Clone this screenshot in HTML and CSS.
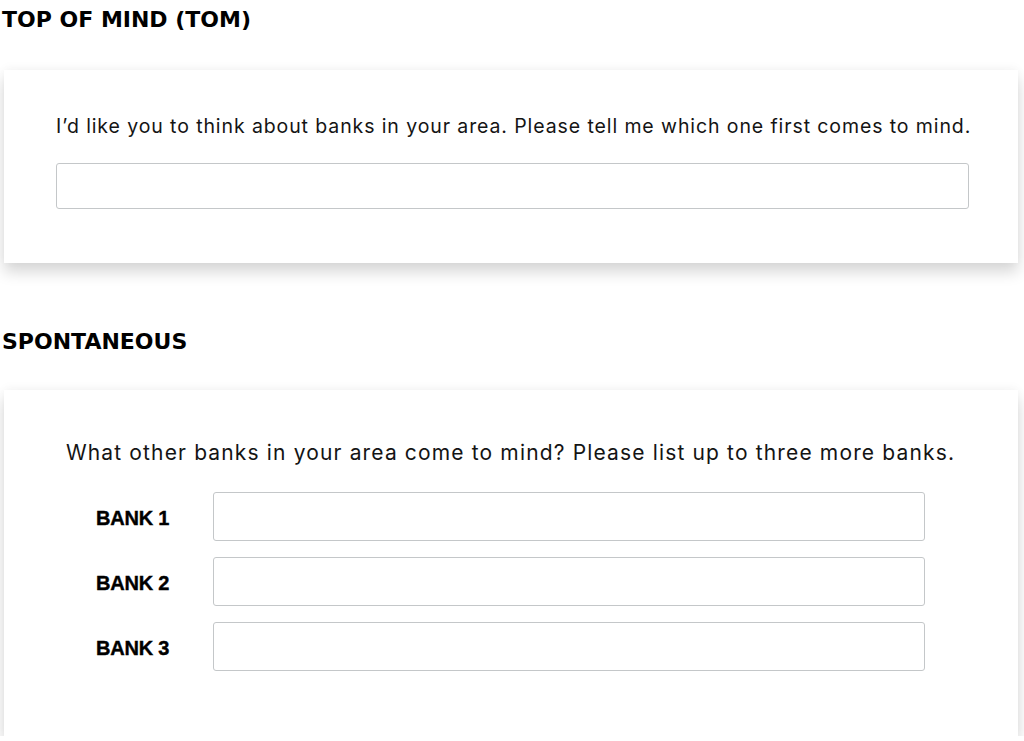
FILE: index.html
```html
<!DOCTYPE html>
<html lang="en">
<head>
<meta charset="utf-8">
<title>Bank awareness</title>
<link rel="stylesheet" href="styles.css">
</head>
<body>
<main class="page">
  <section class="block block-tom">
    <h2 class="block-title">TOP OF MIND (TOM)</h2>
    <div class="card card-tom">
      <p class="question">I’d like you to think about banks in your area. Please tell me which one first comes to mind.</p>
      <input class="field field-wide" type="text" aria-label="Top of mind bank">
    </div>
  </section>
  <section class="block block-spont">
    <h2 class="block-title">SPONTANEOUS</h2>
    <div class="card card-spont">
      <p class="question question-large">What other banks in your area come to mind? Please list up to three more banks.</p>
      <div class="bank-list">
        <label class="bank-row"><span class="bank-label">BANK 1</span><input class="field" type="text"></label>
        <label class="bank-row"><span class="bank-label">BANK 2</span><input class="field" type="text"></label>
        <label class="bank-row"><span class="bank-label">BANK 3</span><input class="field" type="text"></label>
      </div>
    </div>
  </section>
</main>
</body>
</html>
```
FILE: styles.css
```css
* { box-sizing: border-box; }
html, body { margin: 0; padding: 0; background: #fff; }
body {
  font-family: Inter, "Liberation Sans", sans-serif;
  color: #141414;
}
.page {
  padding: 7px 6px 0 4px;
}
.block-title {
  margin: 0 0 0 -2px;
  font-family: "DejaVu Sans", sans-serif;
  font-weight: 700;
  font-size: 22px;
  line-height: 26px;
  color: #000;
}
.card {
  background: #fff;
  box-shadow: 0 9px 14px rgba(0, 0, 0, 0.16), 0 -2px 10px rgba(0, 0, 0, 0.035);
}
.card-tom {
  margin-top: 37px;
  padding: 43px 49px 54px 52px;
}
.block-spont {
  margin-top: 66px;
}
.card-spont {
  margin-top: 35px;
  padding: 48px 93px 65px 92px;
}
.question {
  margin: 0;
  font-size: 19.5px;
  line-height: 27px;
  letter-spacing: 0.9px;
  text-align: center;
  white-space: nowrap;
}
.question-large {
  margin: 0 -70px;
  font-size: 21px;
  line-height: 29px;
  letter-spacing: 1.15px;
}
.field {
  display: block;
  width: 100%;
  height: 46px;
  border: 1.5px solid #c4c7c9;
  border-radius: 3px;
  background: #fff;
  font: inherit;
}
.field-wide {
  margin-top: 23px;
}
.bank-list {
  margin-top: 25px;
  display: flex;
  flex-direction: column;
  gap: 16px;
}
.bank-row {
  display: grid;
  grid-template-columns: 117px 1fr;
  align-items: center;
}
.bank-row .field {
  height: 49px;
}
.bank-label {
  font-family: "Liberation Sans", Arial, sans-serif;
  font-weight: 700;
  font-size: 20px;
  letter-spacing: -0.2px;
  color: #000;
  padding-top: 3px;
  -webkit-text-stroke: 0.4px #000;
}
```
